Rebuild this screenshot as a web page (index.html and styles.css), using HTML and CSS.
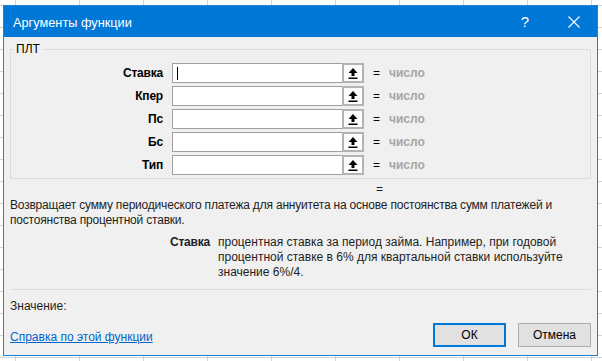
FILE: index.html
```html
<!DOCTYPE html>
<html lang="ru">
<head>
  <meta charset="UTF-8" />
  <title>Аргументы функции</title>
  <link rel="stylesheet" href="styles.css">
</head>
<body>

  <div class="dialog">
    <div class="titlebar">
      <span class="title">Аргументы функции</span>
      <span class="help">?</span>
      <span class="close">
        <svg width="12" height="12" viewBox="0 0 12 12"><path d="M0.5 0.5 L11.5 11.5 M11.5 0.5 L0.5 11.5" stroke="#fff" stroke-width="1.1" fill="none"/></svg>
      </span>
    </div>

    <div class="content">
      <fieldset class="group">
        <legend>ПЛТ</legend>
        <div class="args">
          <label>Ставка</label>
          <div class="field"><span class="caret"></span></div>
          <div class="pick"><svg width="10" height="11" viewBox="0 0 10 11"><path d="M5 0 L9.5 5 L6.5 5 L6.5 8 L3.5 8 L3.5 5 L0.5 5 Z M0.5 9.5 L9.5 9.5 L9.5 11 L0.5 11 Z" fill="#000"/></svg></div>
          <span class="eq">=</span><span class="hint">число</span>

          <label>Кпер</label>
          <div class="field"></div>
          <div class="pick"><svg width="10" height="11" viewBox="0 0 10 11"><path d="M5 0 L9.5 5 L6.5 5 L6.5 8 L3.5 8 L3.5 5 L0.5 5 Z M0.5 9.5 L9.5 9.5 L9.5 11 L0.5 11 Z" fill="#000"/></svg></div>
          <span class="eq">=</span><span class="hint">число</span>

          <label>Пс</label>
          <div class="field"></div>
          <div class="pick"><svg width="10" height="11" viewBox="0 0 10 11"><path d="M5 0 L9.5 5 L6.5 5 L6.5 8 L3.5 8 L3.5 5 L0.5 5 Z M0.5 9.5 L9.5 9.5 L9.5 11 L0.5 11 Z" fill="#000"/></svg></div>
          <span class="eq">=</span><span class="hint">число</span>

          <label>Бс</label>
          <div class="field"></div>
          <div class="pick"><svg width="10" height="11" viewBox="0 0 10 11"><path d="M5 0 L9.5 5 L6.5 5 L6.5 8 L3.5 8 L3.5 5 L0.5 5 Z M0.5 9.5 L9.5 9.5 L9.5 11 L0.5 11 Z" fill="#000"/></svg></div>
          <span class="eq">=</span><span class="hint">число</span>

          <label>Тип</label>
          <div class="field"></div>
          <div class="pick"><svg width="10" height="11" viewBox="0 0 10 11"><path d="M5 0 L9.5 5 L6.5 5 L6.5 8 L3.5 8 L3.5 5 L0.5 5 Z M0.5 9.5 L9.5 9.5 L9.5 11 L0.5 11 Z" fill="#000"/></svg></div>
          <span class="eq">=</span><span class="hint">число</span>
        </div>
      </fieldset>

      <div class="result">=</div>

      <p class="desc">Возвращает сумму периодического платежа для аннуитета на основе постоянства сумм платежей и<br>постоянства процентной ставки.</p>

      <div class="arg-help">
        <strong>Ставка</strong>
        <p>процентная ставка за период займа. Например, при годовой<br>процентной ставке в 6% для квартальной ставки используйте<br>значение 6%/4.</p>
      </div>

      <div class="separator"></div>

      <div class="value">Значение:</div>

      <div class="footer">
        <a href="#" class="help-link">Справка по этой функции</a>
        <div class="buttons">
          <button class="btn btn-ok">ОК</button>
          <button class="btn">Отмена</button>
        </div>
      </div>
    </div>
  </div>

</body>
</html>
```

FILE: styles.css
```css
html, body {
  margin: 0;
  height: 100%;
}

body {
  font-family: "Liberation Sans", Arial, sans-serif;
  font-size: 12px;
  color: #1e1e1e;
  background-color: #fff;
  background-image:
    linear-gradient(to right, #d4d4d4 1px, transparent 1px),
    linear-gradient(to bottom, #d4d4d4 1px, transparent 1px);
  background-size: 64px 22px;
  background-position: 15px 5px;
  overflow: hidden;
}

.dialog {
  margin: 5px 0 0 3px;
  width: 593px;
  height: 349px;
  border: 1px solid #1883d7;
  background: #f0f0f0;
  display: flex;
  flex-direction: column;
  overflow: hidden;
}

.titlebar {
  flex-shrink: 0;
  height: 31px;
  background: #0078d7;
  color: #fff;
  display: flex;
  align-items: center;
  padding: 0 0 0 9px;
}

.title {
  font-size: 12.75px;
  flex: 1;
  margin-top: 1px;
}

.help {
  font-size: 15px;
  width: 20px;
  margin-right: 33px;
  text-align: center;
}

.close {
  width: 12px;
  height: 12px;
  margin-right: 17px;
  display: flex;
}

.content {
  padding: 5px 6px 0 6px;
  display: flex;
  flex-direction: column;
}

.group {
  margin: 0;
  padding: 0 0 3px 3px;
  border: 1px solid #dcdcdc;
  flex-shrink: 0;
}

.group legend {
  padding: 0 2px;
  line-height: 14px;
  color: #000;
}

.args {
  display: grid;
  grid-template-columns: 158px 170px 22px 25px auto;
  grid-auto-rows: 20px;
  row-gap: 3px;
  margin-top: 7px;
  align-items: center;
}

.args label {
  font-weight: bold;
  letter-spacing: -0.2px;
  text-align: right;
  padding-right: 9px;
  color: #000;
}

.field {
  height: 20px;
  box-sizing: border-box;
  border: 1px solid #a0a0a0;
  border-right: none;
  background: #fff;
  position: relative;
}

.caret {
  position: absolute;
  left: 4px;
  top: 3px;
  width: 1px;
  height: 13px;
  background: #000;
}

.pick {
  height: 20px;
  box-sizing: border-box;
  border: 2px solid #b3b3b3;
  background: #fcfcfc;
  display: flex;
  align-items: center;
  justify-content: center;
}

.eq {
  padding-left: 9px;
  color: #000;
}

.hint {
  color: #a6a6a6;
  font-weight: bold;
}

.result {
  margin: 3px 0 0 366px;
  height: 14px;
  line-height: 14px;
}

.desc {
  margin: 2px 0 0 0;
  line-height: 15px;
  letter-spacing: -0.2px;
}

.arg-help {
  display: flex;
  margin-top: 7px;
  line-height: 15px;
}

.arg-help strong {
  width: 200px;
  text-align: right;
  padding-right: 8px;
  flex-shrink: 0;
  letter-spacing: -0.2px;
}

.arg-help p {
  margin: 0;
}

.separator {
  margin-top: 9px;
  height: 1px;
  background: #dcdcdc;
  flex-shrink: 0;
}

.value {
  margin-top: 9px;
  line-height: 15px;
}

.footer {
  display: flex;
  align-items: center;
  margin-top: 9px;
}

.help-link {
  flex: 1;
  color: #0066cc;
  text-decoration: underline;
  margin-top: 4px;
}

.buttons {
  display: flex;
  gap: 12px;
}

.btn {
  width: 73px;
  height: 24px;
  font-family: inherit;
  font-size: 12px;
  color: #000;
  background: #e1e1e1;
  border: 1px solid #adadad;
  padding: 0;
}

.btn-ok {
  border: 2px solid #0078d7;
}
```
